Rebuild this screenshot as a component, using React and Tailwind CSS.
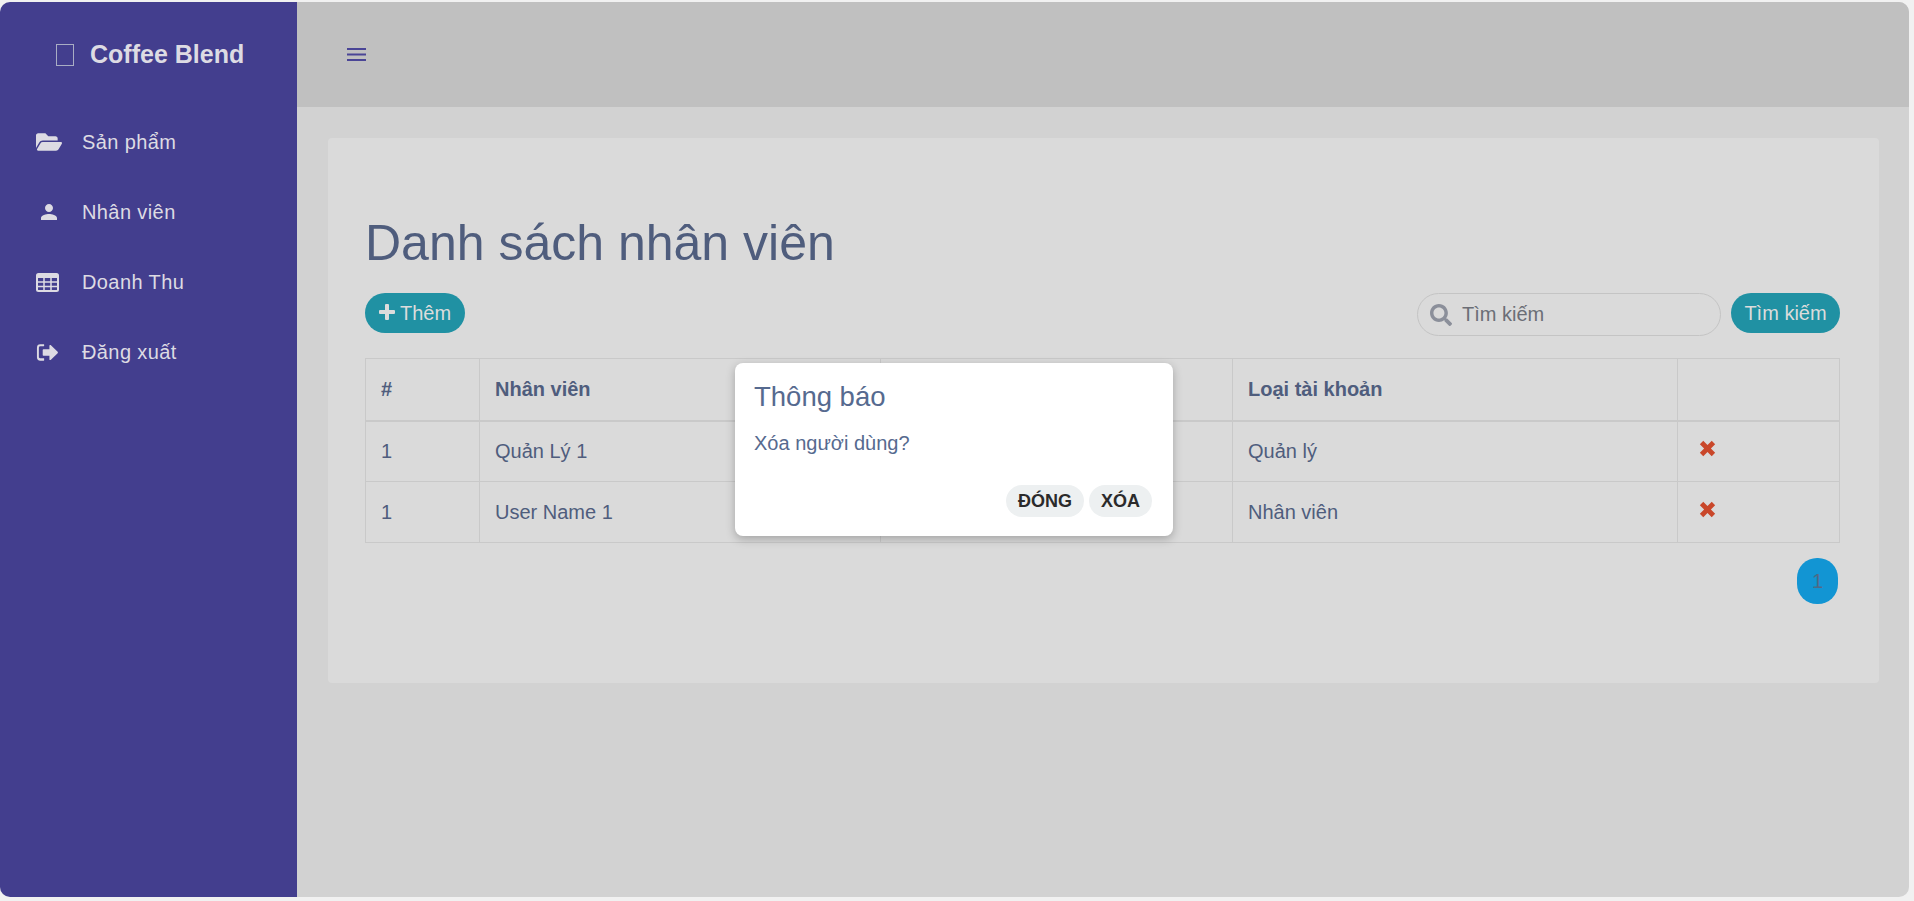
import { FaFolderOpen, FaSearch } from "react-icons/fa";
import { MdPerson } from "react-icons/md";

const menuItems = [
  { label: "Sản phẩm", icon: <FaFolderOpen className="text-[26px]" /> },
  { label: "Nhân viên", icon: <MdPerson className="text-[24px] ml-[1px]" /> },
  {
    label: "Doanh Thu",
    icon: (
      <svg viewBox="0 0 23 19" className="w-[23px] h-[19px]" fill="none" stroke="currentColor">
        <rect x="1" y="1" width="21" height="17" rx="1.500" strokeWidth="2" />
        <path d="M1 3.500h21" strokeWidth="3" />
        <path d="M1 9h21M1 13.500h21M8 5v13M15 5v13" strokeWidth="1.500" />
      </svg>
    ),
  },
  {
    label: "Đăng xuất",
    icon: (
      <svg viewBox="0 0 24 24" className="w-[23px] h-[23px]" fill="currentColor">
        <path d="M8 3.500H4.500A3.500 3.500 0 0 0 1 7v10a3.500 3.500 0 0 0 3.500 3.500H8c.4 0 .5-.2.5-.5v-1.500c0-.4-.2-.5-.5-.5H4.500A1.500 1.500 0 0 1 3 17V7a1.500 1.500 0 0 1 1.500-1.500H8c.4 0 .5-.2.5-.5V4c0-.4-.2-.5-.5-.5Z" />
        <path d="M14 4.800c0-.7.800-1 1.300-.5l7.300 7c.4.400.4 1 0 1.400l-7.300 7c-.5.500-1.300.200-1.300-.5V15.500H7.800c-.5 0-.8-.3-.8-.8V9.300c0-.5.300-.8.800-.8H14Z" />
      </svg>
    ),
  },
];

const rows = [
  { id: 1, name: "Quản Lý 1", type: "Quản lý" },
  { id: 1, name: "User Name 1", type: "Nhân viên" },
];

const RemoveIcon = () => (
  <svg viewBox="0 0 16 16" className="w-[17px] h-[17px] text-[#c9472a] -translate-y-[3px]" fill="currentColor">
    <path d="M4 .8 8 4.800 12 .8 15.200 4 11.200 8l4 4-3.200 3.200-4-4-4 4L.8 12l4-4-4-4Z" />
  </svg>
);

const PlusIcon = () => (
  <svg viewBox="0 0 16 16" className="w-[16px] h-[16px] -translate-y-[1px]" fill="currentColor">
    <path d="M6 1a1 1 0 0 1 1-1h2a1 1 0 0 1 1 1v5h5a1 1 0 0 1 1 1v2a1 1 0 0 1-1 1h-5v5a1 1 0 0 1-1 1H7a1 1 0 0 1-1-1v-5H1a1 1 0 0 1-1-1V7a1 1 0 0 1 1-1h5Z" />
  </svg>
);

const App = () => {
  return (
    <div className="relative h-[901px] bg-[#f1f1f1] pt-[2px] pr-[5px] pb-[4px] font-['Liberation_Sans',Arial,sans-serif]">
      <div className="flex h-full rounded-[10px] overflow-hidden">
        <aside className="w-[297px] shrink-0 bg-[#433e8e] text-[#dddbe3]">
          <div className="h-[105px] flex items-center pl-[56px]">
            <span className="w-[18px] h-[22px] border border-[#a9adc4] mr-[16px]" />
            <span className="text-[25px] font-bold">Coffee Blend</span>
          </div>
          <ul>
            {menuItems.map((item) => (
              <li key={item.label} className="h-[70px] flex items-center pl-[36px]">
                <span className="w-[46px] flex">{item.icon}</span>
                <span className="text-[20px] tracking-[0.4px]">{item.label}</span>
              </li>
            ))}
          </ul>
        </aside>

        <main className="flex-1 bg-[#d2d2d2]">
          <header className="h-[105px] bg-[#c0c0c0] flex items-center pl-[50px]">
            <svg viewBox="0 0 19 13" className="w-[19px] h-[13px] text-[#4a4596]" stroke="currentColor" strokeWidth="1.800">
              <path d="M0 1h19M0 6.500h19M0 12h19" />
            </svg>
          </header>
          <div className="pt-[31px] pl-[31px] pr-[30px]">
            <section className="h-[545px] bg-[#dadada] rounded-[4px] pt-[76px] pl-[37px] pr-[39px] text-[#4f5d7d]">
              <h1 className="text-[50px] leading-[58px]">Danh sách nhân viên</h1>
              <div className="flex items-start justify-between mt-[21px]">
                <button className="h-[40px] w-[100px] rounded-full bg-[#2091a3] text-[#dcdcdc] text-[20px] flex items-center justify-center gap-[5px]">
                  <PlusIcon />
                  Thêm
                </button>
                <div className="flex gap-[10px]">
                  <div className="w-[304px] h-[43px] rounded-full border border-[#c4c4c4] flex items-center pl-[12px] gap-[10px]">
                    <FaSearch className="text-[22px] text-[#8b8f9a]" />
                    <span className="text-[20px] leading-[24px] text-[#6b6e76] -translate-y-[1px]">Tìm kiếm</span>
                  </div>
                  <button className="h-[40px] w-[109px] rounded-full bg-[#2091a3] text-[#dcdcdc] text-[20px]">
                    Tìm kiếm
                  </button>
                </div>
              </div>
              <table className="w-[1475px] mt-[22px] table-fixed border-collapse text-[20px]">
                <thead>
                  <tr className="h-[62px] text-left">
                    <th className="w-[114px] pl-[15px] border border-b-2 border-[#c9c9c9]">#</th>
                    <th className="w-[401px] pl-[15px] border border-b-2 border-[#c9c9c9]">Nhân viên</th>
                    <th className="w-[352px] pl-[15px] border border-b-2 border-[#c9c9c9]"></th>
                    <th className="w-[445px] pl-[15px] border border-b-2 border-[#c9c9c9]">Loại tài khoản</th>
                    <th className="border border-b-2 border-[#c9c9c9]"></th>
                  </tr>
                </thead>
                <tbody>
                  {rows.map((row) => (
                    <tr key={row.name} className="h-[61px]">
                      <td className="pl-[15px] border border-[#c9c9c9]">{row.id}</td>
                      <td className="pl-[15px] border border-[#c9c9c9]">{row.name}</td>
                      <td className="border border-[#c9c9c9]"></td>
                      <td className="pl-[15px] border border-[#c9c9c9]">{row.type}</td>
                      <td className="pl-[21px] border border-[#c9c9c9]">
                        <RemoveIcon />
                      </td>
                    </tr>
                  ))}
                </tbody>
              </table>
              <div className="flex justify-end mt-[15px] pr-[2px]">
                <span className="w-[41px] h-[46px] rounded-[20px] bg-[#1295d3] flex items-center justify-center text-[20px] text-[#4f6a85]">
                  1
                </span>
              </div>
            </section>
          </div>
        </main>
      </div>

      <div className="absolute left-[735px] top-[363px] w-[438px] h-[173px] bg-white rounded-[8px] shadow-[0_3px_10px_rgba(0,0,0,0.25)] pt-[18px] px-[19px] text-[#566a8f]">
        <h2 className="text-[27.500px] leading-[32px]">Thông báo</h2>
        <p className="text-[20px] leading-[24px] mt-[18px]">Xóa người dùng?</p>
        <div className="flex justify-end gap-[5px] mt-[30px] pr-[2px]">
          <button className="w-[78px] h-[32px] rounded-full bg-[#edf0f1] text-[18px] font-bold text-[#2b2b2b]">ĐÓNG</button>
          <button className="w-[63px] h-[32px] rounded-full bg-[#edf0f1] text-[18px] font-bold text-[#2b2b2b]">XÓA</button>
        </div>
      </div>
    </div>
  );
};

export default App;
